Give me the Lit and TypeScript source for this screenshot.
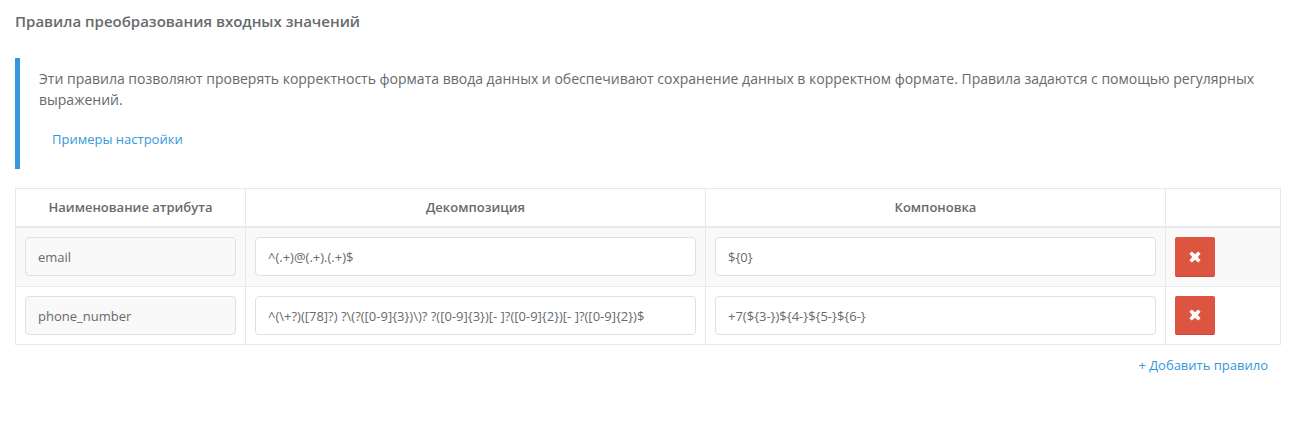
import {LitElement, html, css} from 'lit';
import {customElement} from 'lit/decorators.js';

const rules = [
  {name: 'email', split: '^(.+)@(.+).(.+)$', join: '${0}'},
  {
    name: 'phone_number',
    split: '^(\\+?)([78]?) ?\\(?([0-9]{3})\\)? ?([0-9]{3})[- ]?([0-9]{2})[- ]?([0-9]{2})$',
    join: '+7(${3-})${4-}${5-}${6-}',
  },
];

@customElement('app-root')
export class AppRoot extends LitElement {
  static override styles = css`
    :host {
      display: block;
      padding: 0 14px 0 15px;
      font-family: 'Open Sans', sans-serif;
      font-size: 13px;
      line-height: 20px;
      color: #676a6c;
      background: #fff;
    }
    h4 {
      margin: 0;
      padding-top: 11px;
      font-size: 15px;
      line-height: 20px;
      font-weight: 600;
      color: #676a6c;
    }
    .note {
      margin-top: 27px;
      height: 111px;
      box-sizing: border-box;
      padding: 10px 20px 0 19px;
      border-left: 5px solid #3498db;
      font-size: 14px;
      line-height: 21px;
    }
    .note a {
      display: block;
      margin: 19px 0 0 13px;
      font-size: 13px;
      line-height: 20px;
    }
    a {
      color: #3498db;
      text-decoration: none;
    }
    table {
      width: 100%;
      margin-top: 19px;
      border-collapse: collapse;
      table-layout: fixed;
    }
    th,
    td {
      border: 1px solid #e7eaec;
      padding: 9px;
      vertical-align: top;
    }
    th {
      height: 20px;
      padding: 8px 9px 9px;
      border-bottom-width: 2px;
      font-weight: 600;
      text-align: center;
    }
    tbody tr:first-child td {
      background: #f9f9f9;
    }
    .field {
      box-sizing: border-box;
      height: 39px;
      padding: 9px 12px;
      background: #fff;
      border: 1px solid #e0e0e0;
      border-radius: 4px;
      white-space: nowrap;
      overflow: hidden;
    }
    .field.readonly {
      background: #f9f9f9;
    }
    .remove {
      display: flex;
      align-items: center;
      justify-content: center;
      width: 40px;
      height: 39px;
      padding: 0;
      background: #dd5540;
      border: 0;
      border-bottom: 1px solid #c4493a;
      border-radius: 2px;
    }
    tbody tr:first-child .remove {
      height: 40px;
    }
    .add {
      display: flex;
      justify-content: flex-end;
      padding: 10px 13px 0 0;
    }
  `;

  override render() {
    return html`
      <h4>Правила преобразования входных значений</h4>
      <div class="note">
        Эти правила позволяют проверять корректность формата ввода данных и обеспечивают сохранение данных в корректном формате. Правила задаются с помощью регулярных выражений.
        <a href="#">Примеры настройки</a>
      </div>
      <table>
        <colgroup>
          <col style="width: 230px" />
          <col style="width: 460px" />
          <col style="width: 460px" />
          <col />
        </colgroup>
        <thead>
          <tr>
            <th>Наименование атрибута</th>
            <th>Декомпозиция</th>
            <th>Компоновка</th>
            <th></th>
          </tr>
        </thead>
        <tbody>
          ${rules.map(
            (r) => html`<tr>
              <td><div class="field readonly">${r.name}</div></td>
              <td><div class="field">${r.split}</div></td>
              <td><div class="field">${r.join}</div></td>
              <td>
                <button class="remove" aria-label="Удалить">
                  <svg width="12" height="12" viewBox="0 0 12 12">
                    <path
                      d="M2.8 .4 6 3.2 9.2 .4 11.6 2.8 8.8 6 11.6 9.2 9.2 11.6 6 8.8 2.8 11.6 .4 9.2 3.2 6 .4 2.8Z"
                      fill="#fff"
                    />
                  </svg>
                </button>
              </td>
            </tr>`
          )}
        </tbody>
      </table>
      <div class="add"><a href="#">+ Добавить правило</a></div>
    `;
  }
}

declare global {
  interface HTMLElementTagNameMap {
    'app-root': AppRoot;
  }
}
